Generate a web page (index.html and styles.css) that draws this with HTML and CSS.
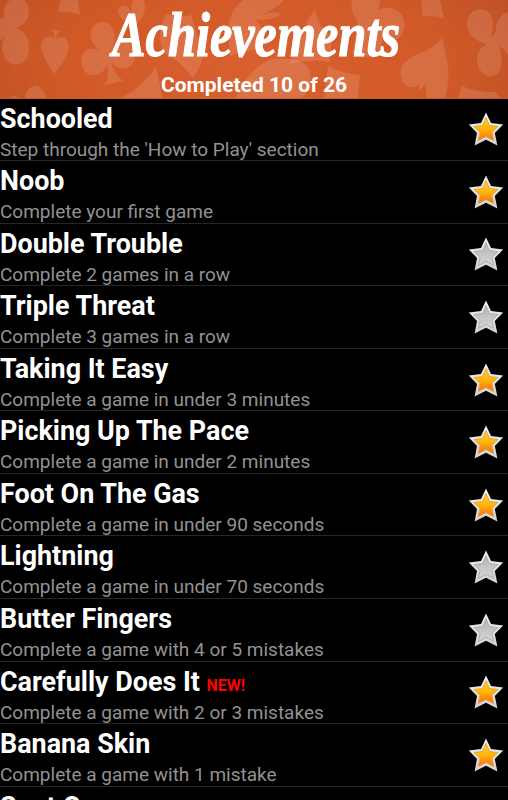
FILE: index.html
```
<!DOCTYPE html>
<html lang="en">
<head>
    <meta charset="UTF-8">
    <meta name="viewport" content="width=device-width, initial-scale=1.0">
    <title>Achievements</title>
    <link rel="stylesheet" href="styles.css">
</head>
<body>

    <!-- Shared shapes -->
    <svg class="defs" width="0" height="0">
        <defs>
            <linearGradient id="gold" x1="0" y1="0" x2="0" y2="1">
                <stop offset="0" stop-color="#ffd21c"/>
                <stop offset="0.5" stop-color="#ffb60a"/>
                <stop offset="1" stop-color="#fb6a10"/>
            </linearGradient>
            <linearGradient id="silver" x1="0" y1="0" x2="0" y2="1">
                <stop offset="0" stop-color="#b4b4b4"/>
                <stop offset="1" stop-color="#d6d6d6"/>
            </linearGradient>
            <linearGradient id="rim" x1="0" y1="0" x2="0" y2="1">
                <stop offset="0" stop-color="#f2f2f2"/>
                <stop offset="1" stop-color="#d2d2d2"/>
            </linearGradient>
            <symbol id="star" viewBox="0 0 36 36">
                <path class="star-rim" d="M18 1.4 L23 12 L35.2 13.4 L26.8 22 L29.4 34.4 L18 28.8 L6.6 34.4 L9 22 L0.8 13.4 L13 12 Z"/>
                <path class="star-fill" d="M18 6.6 L21.4 14.5 L30 15.5 L23.9 21.2 L25.6 29.4 L18 25.4 L10.4 29.4 L12.1 21.2 L6 15.5 L14.6 14.5 Z"/>
            </symbol>
            <symbol id="club" viewBox="0 0 60 72" overflow="visible">
                <path d="M30 0 C46 0 46 20 37 31 C48 20 60 28 60 41 C60 60 38 60 32 46 Q33 62 41 69 L19 69 Q27 62 28 46 C22 60 0 60 0 41 C0 28 12 20 23 31 C14 20 14 0 30 0 Z"/>
            </symbol>
        </defs>
    </svg>

    <div class="header">
        <svg class="pattern" width="508" height="98" viewBox="0 0 508 98">
            <g fill="#fff" fill-opacity="0.12">
                <path d="M4 10 C6 -6 29 -6 29 12 Q28 24 16 28 Q30 33 29 50 C28 70 4 70 2 48 Q2 42 5 36 Q3 39 0 40 L0 18 Q5 20 4 10 Z"/>
                <path d="M60 0 L78 0 L80 15 Q70 11 58 12 Z"/>
                <path d="M52 29 L60 31 Q56 34 56 39 C64 33 71 42 68 52 Q64 62 54 74 Q45 60 41 49 C40 38 49 33 54 39 Q55 33 52 29 Z"/>
                <use href="#club" width="54" height="66" transform="translate(80 21) rotate(-13 27 33)"/>
                <path d="M118 12 Q118 4 126 6 Q130 8 132 14 Q130 4 134 0 L144 0 Q148 14 136 24 Q122 24 118 12 Z"/>
                <path d="M25 98 C27 82 43 82 46 98 Z"/>
                <path d="M9 98 Q14 94 19 98 Z"/>
                <path d="M121 98 Q144 86 156 67 Q160 84 162 98 Z"/>
                <path d="M166 14 Q178 18 192 15 C194 34 206 48 203 56 Q200 68 193 78 Q178 59 166 54 Q154 38 166 14 Z"/>
                <path d="M228 30 Q230 8 244 0 L284 0 Q280 6 260 16 Q274 10 281 14 Q276 20 256 20 Q272 38 260 48 L230 56 Z"/>
                <path d="M315 9 Q318 28 332 36 L330 62 Q310 58 290 64 Q302 28 315 9 Z"/>
                <path d="M235 98 Q248 70 270 59 Q306 56 310 72 Q314 86 302 98 Z"/>
                <path d="M328 66 Q344 74 360 75 L358 98 L324 98 Z"/>
                <path d="M352 0 L380 0 Q380 7 377 10 Q392 4 401 14 Q409 27 399 38 Q388 43 382 30 L382 54 Q364 60 352 53 L358 22 Q349 10 352 0 Z"/>
                <path d="M421 0 L440 0 L444 19 Q435 14 423 17 Z"/>
                <path d="M443 37 Q443 45 447 60 Q451 75 445 98 L426 98 L426 84 L410 98 Q418 94 420 84 Q410 92 403 82 C396 70 404 60 418 54 Q435 48 443 37 Z"/>
                <path d="M474 38 Q466 32 467 22 C469 5 492 5 493 22 Q493 30 491 37 Q497 34 496 27 Q498 15 508 12 L508 54 Q504 49 499 46 Q505 64 498 73 C487 82 476 70 477 57 Q478 48 487 44 Q480 43 474 38 Z"/>
                <path d="M462 86 Q475 92 496 92 L500 98 L458 98 Z"/>
            </g>
        </svg>
        <svg class="logo" width="508" height="70" viewBox="0 0 508 70">
            <text x="112" y="56" textLength="288" lengthAdjust="spacingAndGlyphs">Achievements</text>
        </svg>
        <div class="completed">Completed 10 of 26</div>
    </div>

    <div id="achievements" class="achievements"></div>

    <script src="script.js"></script>

</body>
</html>
```
FILE: styles.css
```
body {
    margin: 0;
    background-color: #000;
    color: #fff;
    font-family: Roboto, sans-serif;
    height: 800px;
    overflow: hidden;
}

.defs {
    display: block;
}

.header {
    position: relative;
    height: 98.5px;
    background: radial-gradient(ellipse 330px 150px at 50% 70%, #d8602e 0%, #d25a28 55%, #bb4f25 100%);
    text-align: center;
}

/* Card suits behind the heading */
.pattern {
    position: absolute;
    top: 0;
    left: 0;
}

.logo {
    position: relative;
    display: block;
    overflow: visible;
    fill: #fff;
    stroke: #fff;
    stroke-width: 1.2;
    font-family: "Liberation Serif", serif;
    font-size: 64px;
    font-weight: bold;
    font-style: italic;
}

.completed {
    position: relative;
    padding-top: 3px;
    font-size: 21px;
    font-weight: bold;
    line-height: 25px;
}

.achievements {
    height: 701.5px;
    overflow: hidden;
}

.achievement {
    display: flex;
    justify-content: space-between;
    box-sizing: border-box;
    height: 62.57px;
    padding-right: 4px;
    border-bottom: 1px solid #272727;
}

.name {
    padding-top: 4px;
    font-size: 26.9px;
    font-weight: bold;
    line-height: 32px;
    white-space: nowrap;
}

.new {
    color: #f00;
    font-size: 16px;
    line-height: 1;
}

.description {
    padding-top: 5px;
    color: #929292;
    font-size: 19px;
    line-height: 20px;
    white-space: nowrap;
}

.star {
    --fill: url(#silver);
    --edge: #a5a5a5;
    align-self: center;
    width: 36px;
    height: 36px;
}

.done .star {
    --fill: url(#gold);
    --edge: #e8962c;
}

.star-rim {
    fill: url(#rim);
}

.star-fill {
    fill: var(--fill);
    stroke: var(--edge);
    stroke-width: 0.8;
}
```
FILE: script.js
```
const achievements = [
    { name: "Schooled", description: "Step through the 'How to Play' section", done: true },
    { name: "Noob", description: "Complete your first game", done: true },
    { name: "Double Trouble", description: "Complete 2 games in a row", done: false },
    { name: "Triple Threat", description: "Complete 3 games in a row", done: false },
    { name: "Taking It Easy", description: "Complete a game in under 3 minutes", done: true },
    { name: "Picking Up The Pace", description: "Complete a game in under 2 minutes", done: true },
    { name: "Foot On The Gas", description: "Complete a game in under 90 seconds", done: true },
    { name: "Lightning", description: "Complete a game in under 70 seconds", done: false },
    { name: "Butter Fingers", description: "Complete a game with 4 or 5 mistakes", done: false },
    { name: "Carefully Does It", description: "Complete a game with 2 or 3 mistakes", done: true, isNew: true },
    { name: "Banana Skin", description: "Complete a game with 1 mistake", done: true },
    { name: "Spot On" }
];

const list = document.getElementById('achievements');

achievements.forEach((item) => {
    const row = document.createElement('div');
    row.className = item.done ? 'achievement done' : 'achievement';
    row.innerHTML = `
        <div>
            <div class="name">${item.name}${item.isNew ? ' <span class="new">NEW!</span>' : ''}</div>
            ${item.description ? `<div class="description">${item.description}</div>` : ''}
        </div>
        <svg class="star"><use href="#star"/></svg>
    `;
    list.appendChild(row);
});
```
